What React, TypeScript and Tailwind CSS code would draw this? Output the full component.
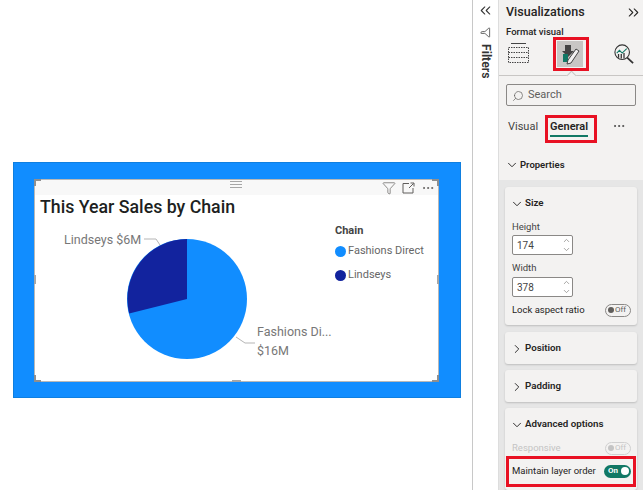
import { ChevronDown, ChevronRight, ChevronUp, ChevronsLeft, ChevronsRight, Filter, MoreHorizontal, Search } from "lucide-react";
import type { ReactNode } from "react";

const font = "font-['Roboto','Open_Sans',sans-serif]";

function Handle({ className }: { className: string }) {
  return <div className={`absolute bg-[#a6a6a6] ${className}`} />;
}

function Corner({ className }: { className: string }) {
  return <div className={`absolute h-[7px] w-[7px] border-[#8f8f8f] ${className}`} />;
}

function PieChart() {
  return (
    <svg viewBox="0 0 404 202" className="absolute left-0 top-0 h-[202px] w-[404px]">
      <circle cx="152" cy="119" r="60" fill="#118dff" />
      <path d="M152 119 L152 59 A60 60 0 0 0 94.2 133.5 Z" fill="#12239e" />
      <path d="M109 59 H121 L125 65" fill="none" stroke="#b5b5b5" />
      <path d="M201 157 L210 163 H220" fill="none" stroke="#b5b5b5" />
      <g fontFamily="Roboto, sans-serif" fontSize="12.5" fill="#777777">
        <text x="29" y="64">Lindseys $6M</text>
        <text x="222" y="156">Fashions Di...</text>
        <text x="222" y="175">$16M</text>
      </g>
    </svg>
  );
}

function Legend() {
  return (
    <div className="absolute left-[300px] top-[43px] flex flex-col text-[11px] text-[#666666]">
      <div className="mb-[4px] font-bold leading-4 text-[#444444]">Chain</div>
      <div className="mb-[8px] flex items-center gap-[2px] leading-4">
        <span className="h-[11px] w-[11px] rounded-full bg-[#118dff]" />
        Fashions Direct
      </div>
      <div className="flex items-center gap-[2px] leading-4">
        <span className="h-[11px] w-[11px] rounded-full bg-[#12239e]" />
        Lindseys
      </div>
    </div>
  );
}

function FocusIcon() {
  return (
    <svg width="13" height="12" viewBox="0 0 13 12" fill="none" stroke="#605e5c">
      <path d="M7 1.5 H1 V11 H11 V6" />
      <path d="M7 6 L11.5 1.5 M8.5 1 H12 V4.5" />
    </svg>
  );
}

function Visual() {
  return (
    <div className="relative h-[203px] w-[405px] border border-[#b8b8b8] bg-white">
      <div className="flex h-[15px] items-center justify-end gap-[6px] bg-[#f8f8f8] pr-[3px] text-[#605e5c]">
        <Filter size={14} strokeWidth={1.2} />
        <FocusIcon />
        <MoreHorizontal size={14} strokeWidth={1.6} />
      </div>
      <div className="pl-[5px] text-[17.75px] font-medium leading-[24px] text-[#201f1e] font-['Roboto',sans-serif]">This Year Sales by Chain</div>
      <PieChart />
      <Legend />
      <div className="absolute left-[195px] top-[1px] flex flex-col gap-[2px]">
        <div className="h-px w-[12px] bg-[#a6a6a6]" />
        <div className="h-px w-[12px] bg-[#a6a6a6]" />
        <div className="h-px w-[12px] bg-[#a6a6a6]" />
      </div>
      <Corner className="-left-px -top-px border-l-2 border-t-2" />
      <Corner className="-right-px -top-px border-r-2 border-t-2" />
      <Corner className="-bottom-px -left-px border-b-2 border-l-2" />
      <Corner className="-bottom-px -right-px border-b-2 border-r-2" />
      <Handle className="-left-px top-[95px] h-[9px] w-[2px]" />
      <Handle className="-right-px top-[95px] h-[9px] w-[2px]" />
      <Handle className="-bottom-px left-[197px] h-[2px] w-[9px]" />
    </div>
  );
}

function Toggle({ on, muted }: { on?: boolean; muted?: boolean }) {
  if (on) {
    return (
      <div className="flex h-[13px] w-[27px] shrink-0 items-center justify-between rounded-full bg-[#117865] pl-[4px] pr-[2px] text-[8px] font-bold leading-none text-white">
        On
        <span className="h-[8px] w-[8px] rounded-full bg-white" />
      </div>
    );
  }
  return (
    <div className={`flex h-[13px] w-[26px] shrink-0 items-center gap-[1px] rounded-full border pl-[2px] text-[8px] leading-none ${muted ? "border-[#d0d0d0] text-[#c4c4c4]" : "border-[#8a8886] text-[#605e5c]"}`}>
      <span className={`h-[6px] w-[6px] rounded-full ${muted ? "bg-[#c4c4c4]" : "bg-[#605e5c]"}`} />
      Off
    </div>
  );
}

function NumberField({ value, className }: { value: string; className: string }) {
  return (
    <div className={`flex h-[20px] w-[61px] items-center justify-between rounded-[2px] border border-[#8a8886] bg-white pl-[4px] pr-[1px] text-[10px] text-[#444444] ${className}`}>
      {value}
      <div className="flex flex-col text-[#8a8886]">
        <ChevronUp size={9} />
        <ChevronDown size={9} />
      </div>
    </div>
  );
}

function Card({ title, open, className, children }: { title: string; open?: boolean; className: string; children?: ReactNode }) {
  return (
    <div className={`rounded-[3px] bg-[#f3f2f1] pl-[7px] pr-[6px] shadow-[0_1px_2px_rgba(0,0,0,0.18)] ${className}`}>
      <div className="flex h-[33px] items-center gap-px whitespace-nowrap text-[9.75px] font-semibold text-[#252423]">
        {open ? <ChevronDown size={14} strokeWidth={1.6} className="-ml-[2px]" /> : <ChevronRight size={14} strokeWidth={1.6} className="-ml-[2px]" />}
        {title}
      </div>
      {children}
    </div>
  );
}

function FieldsIcon() {
  return (
    <svg width="21" height="20" viewBox="0 0 21 20" fill="none" stroke="#444444">
      <path d="M3 0.5 H18" />
      <rect x="0.5" y="4.5" width="20" height="15" strokeDasharray="1.5 1" />
      <path d="M0.5 9.5 H20.5 M0.5 14.5 H20.5" strokeDasharray="1.5 1" />
    </svg>
  );
}

function FormatIcon() {
  return (
    <svg width="22" height="22" viewBox="0 0 22 22" fill="none">
      <path d="M6 2 H12 V8 H15 L9 14 L3 8 H6 Z" fill="#444444" />
      <path d="M4 11 H9 V19 H4 Z" fill="#117865" />
      <path d="M17 6 L20 8 L12 20 L8 21 L9 17 Z" fill="#f3f2f1" stroke="#444444" />
    </svg>
  );
}

function AnalyticsIcon() {
  return (
    <svg width="20" height="20" viewBox="0 0 22 22" fill="none" stroke="#333333">
      <circle cx="9" cy="9" r="8" strokeWidth="1.2" />
      <path d="M14.5 15 L21 21" strokeWidth="2" />
      <path d="M3 10 L6 7 L9 10 L14 5" stroke="#117865" strokeWidth="1.2" />
      <path d="M5 11 V15 M8 11 V16 M11 10 V16" strokeWidth="1.4" />
    </svg>
  );
}

function FiltersRail() {
  return (
    <div className="relative flex h-full w-[26px] flex-col items-center border-l border-[#c8c8c8] bg-white pt-[2px] text-[#333333]">
      <ChevronsLeft size={17} strokeWidth={1.5} />
      <Filter size={11} strokeWidth={1.6} className="mt-[8px] rotate-90" />
      <div className="mt-[6px] text-[12.25px] font-semibold leading-none [writing-mode:vertical-rl]">Filters</div>
    </div>
  );
}

function VizPane() {
  return (
    <div className={`relative flex h-full w-[145px] flex-col border-l border-[#dddddd] bg-[#f3f2f1] ${font}`}>
      <div className="flex h-[24px] items-center justify-between pl-[7px] pr-[1px] text-[12.5px] font-medium text-[#252423]">
        Visualizations
        <ChevronsRight size={17} strokeWidth={1.5} />
      </div>
      <div className="h-[15px] pl-[7px] text-[9.5px] font-medium leading-[15px] text-[#252423]">Format visual</div>
      <div className="relative flex h-[37px] items-start border-b border-[#c8c6c4] pl-[9px] pt-[4px]">
        <FieldsIcon />
        <div className="ml-[28px] mt-[-2px] flex h-[26px] w-[26px] items-center justify-center bg-[#c8c6c4]">
          <FormatIcon />
        </div>
        <div className="ml-[31px] mt-px">
          <AnalyticsIcon />
        </div>
        <div className="absolute bottom-[-4px] left-[69px] h-[7px] w-[7px] rotate-45 border-l border-t border-[#c8c6c4] bg-[#f3f2f1]" />
      </div>
      <div className="mx-[7px] mt-[8px] flex h-[22px] items-center gap-[4px] rounded-[2px] border border-[#8a8886] pl-[5px] pt-px text-[11px] text-[#605e5c]">
        <Search size={12} strokeWidth={1.4} className="-scale-x-100" />
        Search
      </div>
      <div className="mt-[9px] flex h-[32px] items-start pl-[9px] pt-[3px] text-[11px] text-[#444444]">
        <div className="leading-[18px]">Visual</div>
        <div className="ml-[12px] border-b-2 border-[#117865] font-semibold leading-[17px] text-[#252423]">General</div>
        <MoreHorizontal size={14} strokeWidth={1.6} className="ml-[24px] mt-[1px]" />
      </div>
      <div className="flex h-[33px] items-center gap-[1px] pl-[6px] pt-[3px] text-[9.5px] font-semibold text-[#252423]">
        <ChevronDown size={14} strokeWidth={1.6} />
        Properties
      </div>
      <div className="flex min-h-0 flex-1 flex-col bg-[#e6e6e6] px-[6px] pt-[7px]">
        <Card title="Size" open className="mb-[7px] h-[138px]">
          <div className="text-[9.5px] leading-[14px] text-[#444444]">Height</div>
          <NumberField value="174" className="mt-px" />
          <div className="mt-[6px] text-[9.5px] leading-[14px] text-[#444444]">Width</div>
          <NumberField value="378" className="mt-[2px]" />
          <div className="mt-[6px] flex items-center justify-between whitespace-nowrap text-[9.5px] leading-[14px] text-[#252423]">
            Lock aspect ratio
            <Toggle />
          </div>
        </Card>
        <Card title="Position" className="mb-[6px] h-[32px]" />
        <Card title="Padding" className="mb-[6px] h-[32px]" />
        <Card title="Advanced options" open className="h-[82px]">
          <div className="flex items-center justify-between whitespace-nowrap text-[9.5px] leading-[14px] text-[#c4c4c4]">
            Responsive
            <Toggle muted />
          </div>
          <div className="mt-[9px] flex items-center justify-between whitespace-nowrap text-[9.5px] leading-[14px] text-[#252423]">
            Maintain layer order
            <Toggle on />
          </div>
        </Card>
      </div>
      <div className="absolute left-[54px] top-[37px] h-[34px] w-[36px] border-[3px] border-[#e81123]" />
      <div className="absolute left-[46px] top-[115px] h-[28px] w-[52px] border-[3px] border-[#e81123]" />
      <div className="absolute left-[7px] top-[456px] h-[31px] w-[130px] border-[3px] border-[#e81123]" />
    </div>
  );
}

export default function App() {
  return (
    <div className={`flex h-[490px] w-[643px] overflow-hidden bg-white ${font}`}>
      <div className="h-full w-[472px] pl-[13px] pt-[162px]">
        <div className="h-[236px] w-[448px] border border-[#0f7fe0] bg-[#118dff] pl-[20px] pt-[16px]">
          <Visual />
        </div>
      </div>
      <FiltersRail />
      <VizPane />
    </div>
  );
}
